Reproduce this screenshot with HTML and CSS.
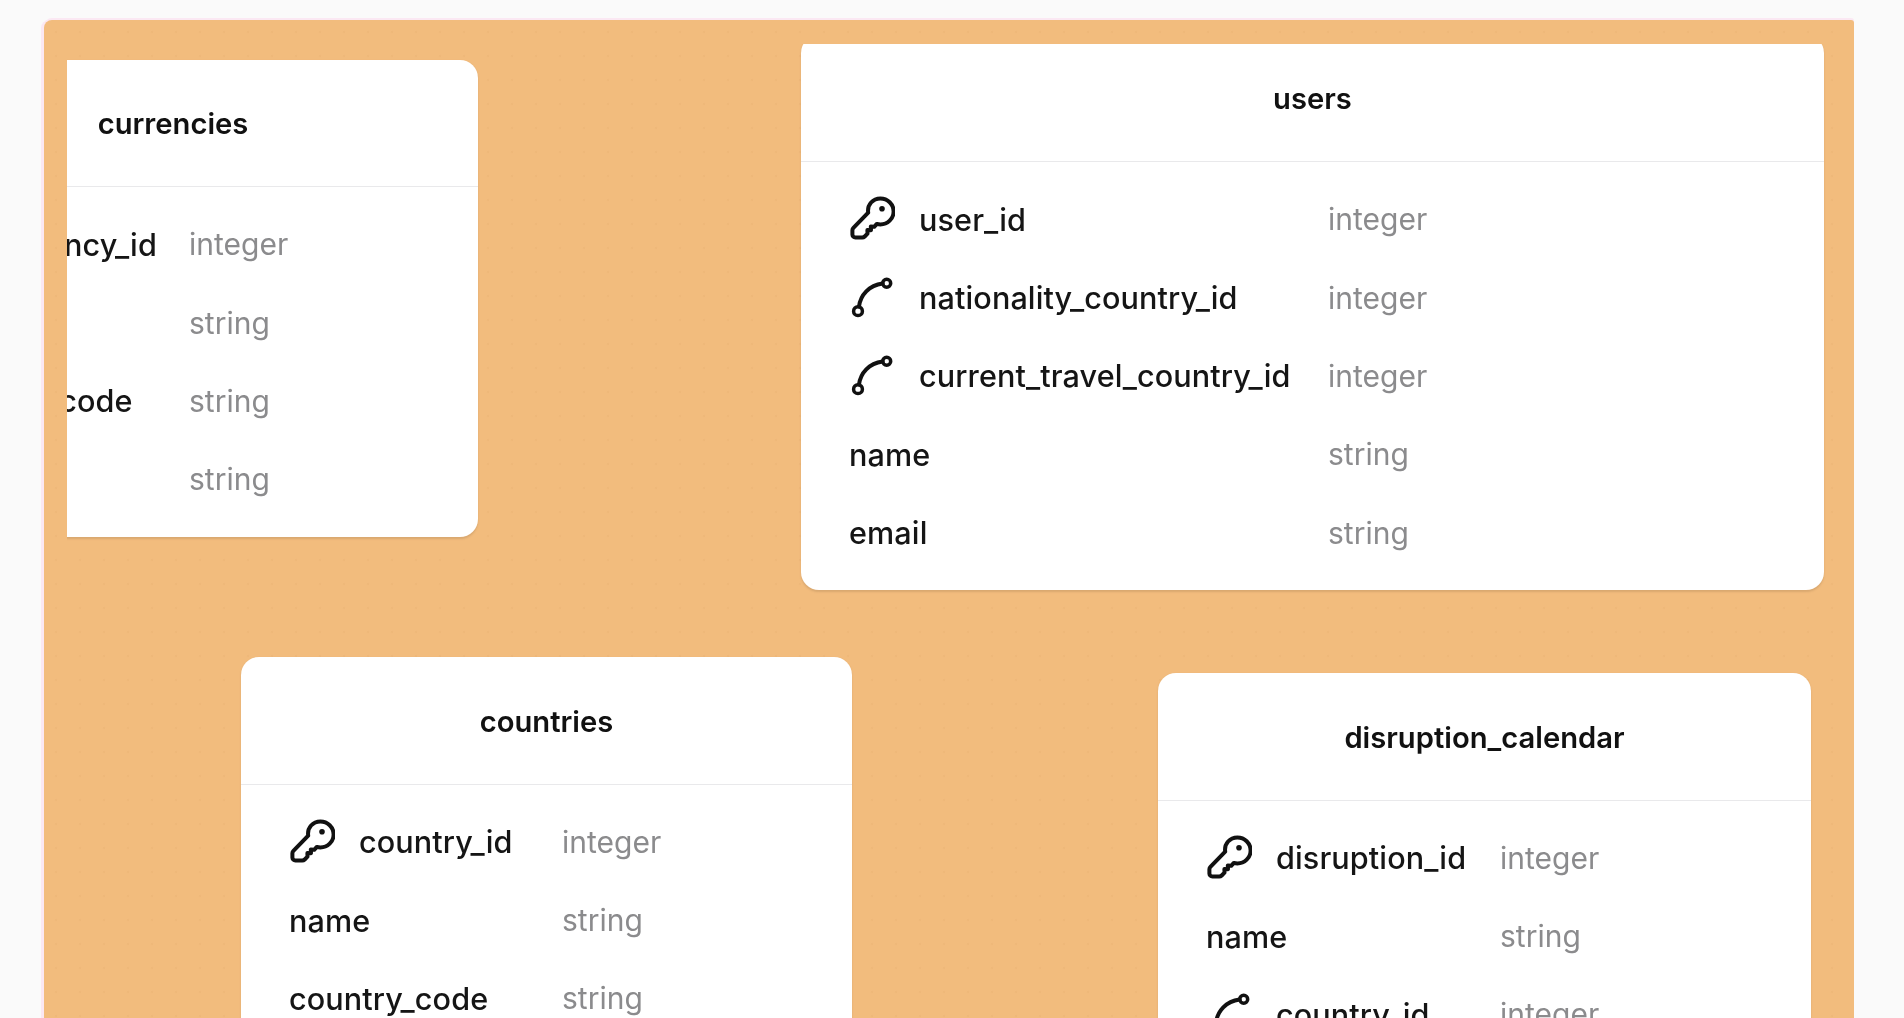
FILE: index.html
```html
<!DOCTYPE html>
<html lang="en">
<head>
<meta charset="utf-8">
<title>Schema diagram</title>
<link rel="stylesheet" href="styles.css">
</head>
<body>
<svg class="defs" width="0" height="0" aria-hidden="true">
  <symbol id="key" viewBox="0 0 46 46">
    <path d="M19.2 16.6C18 8.6 24 2.4 31.4 2.4 38.6 2.4 44.6 8.2 44.6 15.4S38.6 28.4 31.4 28.4c-1.2 0-2.4-.2-3.6-.5l-2.6 2.9-3.4-.2.2 3.6-3.6-.1.1 3.6-2.8 2.8a3.6 3.6 0 0 1-2.5 1H6.4a3 3 0 0 1-3-3v-4.2c0-.9.4-1.8 1-2.4L19.2 16.6z" fill="none" stroke="currentColor" stroke-width="4" stroke-linejoin="round" stroke-linecap="round"/>
    <circle cx="33" cy="12.8" r="2.8" fill="currentColor"/>
  </symbol>
  <symbol id="link" viewBox="0 0 46 46">
    <path d="M10 31.6C11.5 20 20 10.4 33.6 8.6" fill="none" stroke="currentColor" stroke-width="4" stroke-linecap="round"/>
    <circle cx="37.7" cy="8.2" r="4" fill="none" stroke="currentColor" stroke-width="3.5"/>
    <circle cx="9" cy="36.2" r="4.4" fill="none" stroke="currentColor" stroke-width="3.5"/>
  </symbol>
</svg>
<main class="canvas">
  <div class="viewport">
    <section class="card currencies">
      <h2 class="title">currencies</h2>
      <div class="rows">
        <div class="row"><span class="name"><svg class="icon"><use href="#key"/></svg>currency_id</span><span class="type">integer</span></div>
        <div class="row"><span class="name">name</span><span class="type">string</span></div>
        <div class="row"><span class="name">currency_code</span><span class="type">string</span></div>
        <div class="row"><span class="name">symbol</span><span class="type">string</span></div>
      </div>
    </section>
    <section class="card users">
      <h2 class="title">users</h2>
      <div class="rows">
        <div class="row"><span class="name"><svg class="icon"><use href="#key"/></svg>user_id</span><span class="type">integer</span></div>
        <div class="row"><span class="name"><svg class="icon"><use href="#link"/></svg>nationality_country_id</span><span class="type">integer</span></div>
        <div class="row"><span class="name"><svg class="icon"><use href="#link"/></svg>current_travel_country_id</span><span class="type">integer</span></div>
        <div class="row"><span class="name">name</span><span class="type">string</span></div>
        <div class="row"><span class="name">email</span><span class="type">string</span></div>
      </div>
    </section>
    <section class="card countries">
      <h2 class="title">countries</h2>
      <div class="rows">
        <div class="row"><span class="name"><svg class="icon"><use href="#key"/></svg>country_id</span><span class="type">integer</span></div>
        <div class="row"><span class="name">name</span><span class="type">string</span></div>
        <div class="row"><span class="name">country_code</span><span class="type">string</span></div>
      </div>
    </section>
    <section class="card disruption">
      <h2 class="title">disruption_calendar</h2>
      <div class="rows">
        <div class="row"><span class="name"><svg class="icon"><use href="#key"/></svg>disruption_id</span><span class="type">integer</span></div>
        <div class="row"><span class="name">name</span><span class="type">string</span></div>
        <div class="row"><span class="name"><svg class="icon"><use href="#link"/></svg>country_id</span><span class="type">integer</span></div>
      </div>
    </section>
  </div>
</main>
</body>
</html>
```
FILE: styles.css
```css
html, body {
  margin: 0;
  height: 100%;
  overflow: hidden;
  background: #fafafa;
}
.defs { position: absolute; }
.canvas {
  position: relative;
  box-sizing: border-box;
  margin: 20px 50px 0 44px;
  height: 998px;
  background-color: #f2bc7d;
  background-image: radial-gradient(circle, rgba(190, 130, 70, .07) 1.2px, transparent 1.6px);
  background-size: 24px 24px;
  border-radius: 8px 3px 0 0;
  box-shadow: -3px 0 0 #fbe8f3, 0 -2px 0 #fbe8f3;
}
.viewport {
  position: absolute;
  top: 24px;
  left: 23px;
  right: 0;
  bottom: 0;
  overflow: hidden;
}
.card {
  position: absolute;
  box-sizing: border-box;
  background: #fff;
  border-radius: 18px;
  box-shadow: 0 1.5px 2px rgba(120, 90, 60, .2);
  font-family: Inter, "Liberation Sans", sans-serif;
  filter: blur(.45px);
}
.title {
  margin: 0;
  height: 127.5px;
  box-sizing: border-box;
  padding-top: 2px;
  border-bottom: 1.5px solid #e9e9eb;
  display: flex;
  align-items: center;
  justify-content: center;
  font-size: 29.2px;
  font-weight: 600;
  color: #111;
}
.rows { padding: 18px 48px; }
.row {
  display: grid;
  height: 78.4px;
  align-items: center;
  font-size: 30px;
}
.name {
  display: flex;
  align-items: center;
  gap: 24px;
  font-size: 30.6px;
  font-weight: 500;
  letter-spacing: .1px;
  color: #151515;
  white-space: nowrap;
}
.type { color: #8b8b8d; }
.icon {
  flex: none;
  width: 46px;
  height: 46px;
  color: #111;
}
.currencies { left: -199px; top: 15.5px; width: 610px; }
.currencies .row { grid-template-columns: 273px 1fr; }
.users { left: 734px; top: -9.5px; width: 1023px; }
.users .row { grid-template-columns: 479px 1fr; }
.countries { left: 174px; top: 613px; width: 611px; }
.countries .row { grid-template-columns: 273px 1fr; }
.disruption { left: 1091px; top: 629px; width: 653px; }
.disruption .row { grid-template-columns: 294px 1fr; }
```
